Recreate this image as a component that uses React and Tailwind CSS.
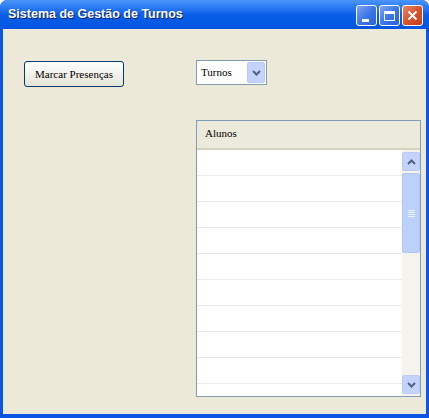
const rows = Array.from({ length: 10 });

const TitleButton = ({ children, red }) => (
    <div
        className={`w-[21px] h-[21px] rounded-[3px] border border-white flex items-center justify-center ${red
            ? 'bg-gradient-to-br from-[#E5856A] via-[#D9532B] to-[#C4401C]'
            : 'bg-gradient-to-br from-[#7FA3F2] via-[#3C78E8] to-[#2A5FDB]'
            }`}
    >
        {children}
    </div>
);

const Chevron = ({ up }) => (
    <svg width="9" height="6" viewBox="0 0 9 6">
        <path
            d={up ? 'M1 5 L4.5 1.5 L8 5' : 'M1 1 L4.5 4.5 L8 1'}
            fill="none"
            stroke="#4D6185"
            strokeWidth="2"
        />
    </svg>
);

export default function App() {
    return (
        <div className="w-[429px] h-[418px] flex flex-col bg-[#0A55E6] rounded-t-[7px] overflow-hidden">
            {/* title bar */}
            <div className="h-[29px] flex items-center pl-[8px] pr-[6px] bg-gradient-to-b from-[#4A95FA] via-[#0A5FE8] to-[#0055E0] rounded-t-[7px]">
                <span
                    className="flex-1 text-white text-[12.5px] font-bold [text-shadow:1px_1px_0_#0A1E6E]"
                    style={{ fontFamily: '"Liberation Sans", sans-serif' }}
                >
                    Sistema de Gestão de Turnos
                </span>
                <div className="flex gap-[2px] mt-[2px]">
                    <TitleButton>
                        <div className="w-[7px] h-[3px] bg-white mt-[9px] -ml-[3px]" />
                    </TitleButton>
                    <TitleButton>
                        <div className="w-[11px] h-[10px] border border-white border-t-[3px]" />
                    </TitleButton>
                    <TitleButton red>
                        <svg width="11" height="11" viewBox="0 0 11 11">
                            <path d="M1.5 1.5 L9.5 9.5 M9.5 1.5 L1.5 9.5" stroke="white" strokeWidth="2" />
                        </svg>
                    </TitleButton>
                </div>
            </div>

            {/* client area */}
            <div
                className="flex-1 mx-[3px] mb-[4px] bg-[#ECE9D8] flex pt-[32px]"
                style={{ fontFamily: '"Liberation Serif", serif' }}
            >
                <div className="w-[193px] pl-[21px]">
                    <button className="w-[100px] h-[26px] rounded-[3px] border border-[#003C74] bg-gradient-to-b from-white to-[#E6E3D7] text-[11px] text-black">
                        Marcar Presenças
                    </button>
                </div>

                <div className="flex flex-col">
                    <div className="w-[71px] h-[25px] mt-[-1px] border border-[#7F9DB9] bg-white flex items-center pl-[4px] pr-[1px]">
                        <span className="flex-1 text-[11px] text-black">Turnos</span>
                        <div className="w-[18px] h-[21px] rounded-[2px] border border-[#B9CBF3] bg-[#C3D3FD] flex items-center justify-center">
                            <Chevron />
                        </div>
                    </div>

                    <div className="mt-[35px] w-[225px] h-[277px] border border-[#7F9DB9] flex flex-col">
                        <div className="h-[29px] bg-[#EBEADB] border-b-2 border-[#D6D2C2] flex items-center pl-[8px] pb-[3px] text-[11px] text-black">
                            Alunos
                        </div>
                        <div className="flex-1 flex overflow-hidden">
                            <div className="flex-1 bg-white">
                                {rows.map((_, i) => (
                                    <div key={i} className="h-[26px] border-b border-[#EAEAEA]" />
                                ))}
                            </div>
                            <div className="w-[18px] bg-[#F4F3EE] flex flex-col py-[2px] gap-[2px]">
                                <div className="h-[19px] rounded-[2px] border border-[#B9CBF3] bg-[#C3D3FD] flex items-center justify-center">
                                    <Chevron up />
                                </div>
                                <div className="h-[80px] rounded-[2px] border border-[#B0C6F6] bg-[#BCD0FC] flex flex-col items-center justify-center gap-[1px]">
                                    {[0, 1, 2, 3].map((i) => (
                                        <div key={i} className="w-[7px] h-[1px] bg-[#EEF4FE]" />
                                    ))}
                                </div>
                                <div className="flex-1" />
                                <div className="h-[19px] rounded-[2px] border border-[#B9CBF3] bg-[#C3D3FD] flex items-center justify-center">
                                    <Chevron />
                                </div>
                            </div>
                        </div>
                    </div>
                </div>
            </div>
        </div>
    );
}
